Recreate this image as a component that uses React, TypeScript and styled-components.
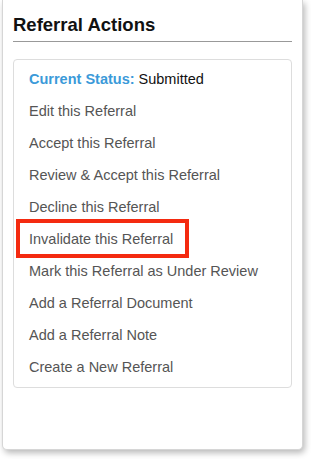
import styled, { createGlobalStyle } from 'styled-components';

const GlobalStyle = createGlobalStyle`
  html, body {
    margin: 0;
    padding: 0;
    background: #fff;
  }
  body {
    font-family: "Liberation Sans", Arial, Helvetica, sans-serif;
  }
`;

const Page = styled.div`
  padding: 0 8px 9px 2px;
  width: 311px;
  box-sizing: border-box;
`;

const Panel = styled.aside`
  position: relative;
  height: 450px;
  box-sizing: border-box;
  background: #fff;
  border: 1px solid #d6d6d6;
  border-top: none;
  border-radius: 0 0 5px 5px;
  box-shadow: 2px 3px 6px rgba(0, 0, 0, 0.28);
  padding: 14px 10px 0 10px;
`;

const Title = styled.h2`
  margin: 0;
  font-size: 18.5px;
  line-height: 21px;
  font-weight: 700;
  color: #111;
  padding-bottom: 6px;
  border-bottom: 1px solid #999;
`;

const ActionCard = styled.div`
  margin-top: 17px;
  border: 1px solid #ddd;
  border-radius: 4px;
  padding: 3px 0 4px;
  display: flex;
  flex-direction: column;
`;

const Row = styled.div<{ $flagged?: boolean }>`
  position: relative;
  height: 32px;
  line-height: 32px;
  padding-left: 15px;
  font-size: 14.5px;
  color: #555;
  white-space: nowrap;

  ${(p) =>
    p.$flagged &&
    `
    &::after {
      content: '';
      position: absolute;
      left: 2px;
      top: -4px;
      width: 173px;
      height: 39px;
      box-sizing: border-box;
      border: 4px solid #f42a10;
    }
  `}
`;

const StatusLabel = styled.span`
  color: #3b9ad9;
  font-weight: 700;
  margin-right: 4px;
`;

const StatusValue = styled.span`
  color: #111;
`;

const actions = [
  'Edit this Referral',
  'Accept this Referral',
  'Review & Accept this Referral',
  'Decline this Referral',
  'Invalidate this Referral',
  'Mark this Referral as Under Review',
  'Add a Referral Document',
  'Add a Referral Note',
  'Create a New Referral',
];

export default function App() {
  return (
    <>
      <GlobalStyle />
      <Page>
        <Panel>
          <Title>Referral Actions</Title>
          <ActionCard>
            <Row>
              <StatusLabel>Current Status:</StatusLabel>
              <StatusValue>Submitted</StatusValue>
            </Row>
            {actions.map((a) => (
              <Row key={a} $flagged={a === 'Invalidate this Referral'}>
                {a}
              </Row>
            ))}
          </ActionCard>
        </Panel>
      </Page>
    </>
  );
}
